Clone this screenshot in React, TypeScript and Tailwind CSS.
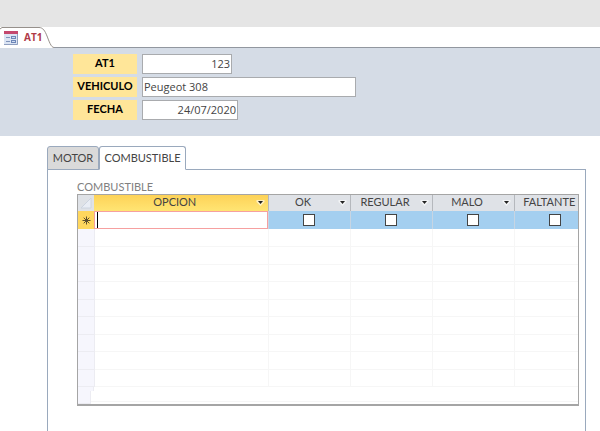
import { useState } from "react";
import { clsx } from "clsx";

const fields = [
  { id: "at1", label: "AT1", value: "123", className: "w-[90px] text-right" },
  { id: "vehiculo", label: "VEHICULO", value: "Peugeot 308", className: "w-[214px]" },
  { id: "fecha", label: "FECHA", value: "24/07/2020", className: "w-24 text-right" },
];

const tabs = ["MOTOR", "COMBUSTIBLE"];
const checkColumns = ["OK", "REGULAR", "MALO", "FALTANTE"];
const emptyRows = Array.from({ length: 9 }, (_, i) => i);

function FormIcon() {
  return (
    <svg width="14" height="14" viewBox="0 0 14 14" aria-hidden="true">
      <rect width="14" height="14" fill="#dbe4f3" />
      <rect width="14" height="3" fill="#c4486e" />
      <path d="M13.5 3v10.5H0" stroke="#8f9fc0" fill="none" />
      <path d="M2 6.5h4M2 10.5h4" stroke="#8094bb" />
      <rect x="7" y="5" width="5" height="3" fill="#6c86b8" />
      <rect x="7" y="9" width="5" height="3" fill="#6c86b8" />
      <path d="M8 6.5h3M8 10.5h3" stroke="#cfdbf0" />
    </svg>
  );
}

function Caret() {
  return (
    <svg className="shrink-0" width="9" height="6" viewBox="0 0 9 6" aria-hidden="true">
      <path d="M0.5 0h8v2L4.5 6 0.5 2z" fill="#fff" opacity="0.6" />
      <path d="M2 1h5L4.5 4z" fill="#222" />
    </svg>
  );
}

function ColumnHeader({ name, active }: { name: string; active?: boolean }) {
  return (
    <th
      scope="col"
      className={clsx(
        "h-4 p-0 font-normal",
        active
          ? "bg-linear-to-b from-[#fdd257] to-[#ffe573]"
          : "border-l border-[#b5b8bd] bg-[#dfe2e7]",
      )}
    >
      <button type="button" className="flex h-4 w-full items-center pr-[3px]">
        <span className="flex-1 pb-0.5 text-center leading-[14px]">{name}</span>
        <Caret />
      </button>
    </th>
  );
}

export default function App() {
  const [activeTab, setActiveTab] = useState("COMBUSTIBLE");

  return (
    <div className="flex min-h-screen flex-col bg-white font-['Lato','Liberation_Sans',sans-serif] text-[11px] text-[#444]">
      <div className="h-[27px] bg-[#e5e5e5]" />

      {/* Document tab */}
      <div className="flex h-[21px] items-end">
        <button
          type="button"
          className="relative flex h-[21px] w-[54px] items-center gap-1.5 pl-1 font-['Open_Sans','Liberation_Sans',sans-serif] text-[10px] font-bold text-[#b03a48]"
        >
          <svg
            className="absolute inset-0"
            width="54"
            height="21"
            viewBox="0 0 54 21"
            fill="none"
            aria-hidden="true"
          >
            <path
              d="M0 2L2 0.5H39C43 0.5 45 4 47 9C49 14 51 20.5 54 20.5"
              stroke="#96908b"
              strokeWidth="1"
            />
          </svg>
          <FormIcon />
          <span>AT1</span>
        </button>
        <div className="h-px flex-1 bg-[#92979f]" />
      </div>

      <form className="flex h-[88px] flex-col gap-[3px] bg-[#d5dce6] pt-1.5 pl-[73px]">
        {fields.map((field) => (
          <div key={field.id} className="flex gap-[5px]">
            <label
              htmlFor={field.id}
              className="h-5 w-16 bg-[#ffe699] text-center leading-[18px] font-bold text-black"
            >
              {field.label}
            </label>
            <input
              id={field.id}
              type="text"
              defaultValue={field.value}
              className={clsx(
                "h-5 border border-[#a9abae] bg-white px-px pb-0.5 font-['Open_Sans','Liberation_Sans',sans-serif] text-[11px]",
                field.className,
              )}
            />
          </div>
        ))}
      </form>

      <main className="mt-2.5 mr-3.5 ml-[47px] flex flex-1 flex-col">
        <div role="tablist" className="relative z-10 -mb-px flex">
          {tabs.map((tab) => (
            <button
              key={tab}
              type="button"
              role="tab"
              aria-selected={tab === activeTab}
              onClick={() => setActiveTab(tab)}
              className={clsx(
                "h-6 rounded-t-[3px] border border-[#9aa9bd] text-center",
                tab === "MOTOR" ? "w-[52px]" : "w-[87px]",
                tab === activeTab ? "border-b-white bg-white" : "bg-[#dadada]",
              )}
            >
              {tab}
            </button>
          ))}
        </div>

        <section
          role="tabpanel"
          aria-label={activeTab}
          className="flex-1 border border-b-0 border-[#9aa9bd] pt-2.5 pr-1.5 pl-[29px]"
        >
          <h2 className="h-3.5 leading-[14px] text-[#808080]">COMBUSTIBLE</h2>
          <div className="overflow-hidden border border-b-2 border-[#a5a5a5]">
            <table className="w-full min-w-[518px] table-fixed border-collapse">
              <colgroup>
                <col className="w-4" />
                <col className="w-[174px]" />
                <col className="w-[82px]" />
                <col className="w-[82px]" />
                <col className="w-[82px]" />
                <col />
              </colgroup>
              <thead>
                <tr>
                  <th className="h-4 bg-[#dfe2e7] p-0">
                    <svg className="mx-auto" width="12" height="12" aria-hidden="true">
                      <path d="M11 1v10H1z" fill="#e9edf5" stroke="#cdd4e0" />
                    </svg>
                  </th>
                  <ColumnHeader name="OPCION" active />
                  {checkColumns.map((name) => (
                    <ColumnHeader key={name} name={name} />
                  ))}
                </tr>
              </thead>
              <tbody>
                <tr>
                  <th scope="row" className="h-[18px] bg-[#ffd75e] p-0">
                    <svg
                      className="mx-auto"
                      width="9"
                      height="9"
                      viewBox="0 0 9 9"
                      stroke="#5b4d2c"
                      aria-hidden="true"
                    >
                      <path d="M4.5 0.5v8M0.5 4.5h8M1.7 1.7l5.6 5.6M7.3 1.7l-5.6 5.6" />
                    </svg>
                  </th>
                  <td className="h-[18px] p-0">
                    <div className="flex h-[18px] items-center border border-[#f6a0a0] bg-white pl-0.5">
                      <span className="h-4 w-px bg-black" />
                      <input
                        type="text"
                        aria-label="OPCION"
                        className="h-4 w-full bg-transparent outline-none"
                      />
                    </div>
                  </td>
                  {checkColumns.map((name) => (
                    <td key={name} className="h-[18px] border-l border-[#c7d5e3] bg-[#a4cff0] p-0">
                      <input
                        type="checkbox"
                        aria-label={name}
                        className="mx-auto block size-3 appearance-none border border-[#444] bg-white checked:bg-[#444]"
                      />
                    </td>
                  ))}
                </tr>
                {emptyRows.map((row) => (
                  <tr key={row} className={row % 2 ? "h-[18px]" : "h-[17px]"}>
                    <td className="border-r border-b border-[#ececf2] bg-[#f6f6fd]" />
                    <td className="border-b border-[#f6f6f6]" />
                    {checkColumns.map((name) => (
                      <td key={name} className="border-b border-l border-[#f6f6f6]" />
                    ))}
                  </tr>
                ))}
              </tbody>
            </table>
            {/* Scroll bar strip */}
            <div className="flex h-[17px] flex-col">
              <div className="h-1 w-4 border-r border-[#ececf2] bg-[#f6f6fd]" />
              <div className="flex h-[13px]">
                <div className="w-[13px] border-r border-b border-[#ececf2] bg-[#f6f6fd]" />
                <div className="mb-0.5 flex-1 border-b border-[#f6f6f6]" />
              </div>
            </div>
          </div>
        </section>
      </main>
    </div>
  );
}
